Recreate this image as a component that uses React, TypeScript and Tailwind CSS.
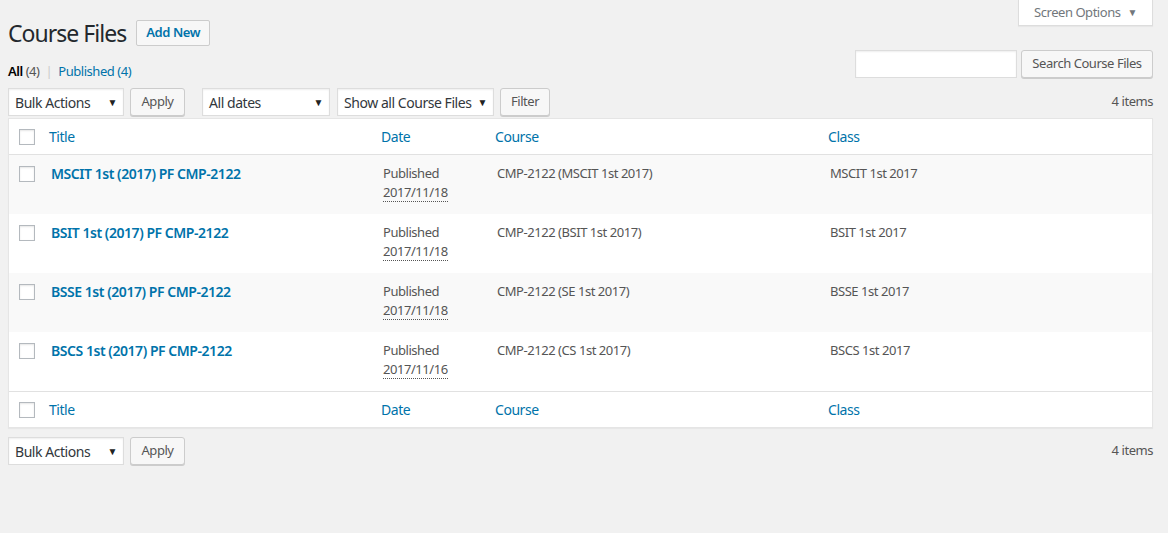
import React from "react";

const font = { fontFamily: '"Segoe UI", "Noto Sans", sans-serif' };

function Checkbox() {
  return <div className="w-4 h-4 bg-white border border-[#b4b9be] shadow-[inset_0_1px_2px_rgba(0,0,0,0.1)]" />;
}

function Select({ label, w }: { label: string; w: string }) {
  return (
    <div className={`${w} h-[28px] bg-white border border-[#ddd] shadow-[inset_0_1px_2px_rgba(0,0,0,0.07)] flex items-center justify-between pl-[6px] pr-[6px] text-[14px] text-[#32373c]`}>
      <span>{label}</span>
      <span className="text-[10px] text-[#222]">▼</span>
    </div>
  );
}

function Button({ label, w }: { label: string; w?: string }) {
  return (
    <div className={`${w ?? ""} h-[28px] px-[8px] bg-[#f7f7f7] border border-[#ccc] rounded-[3px] shadow-[0_1px_0_#ccc] flex items-center justify-center text-[13px] text-[#555]`}>
      {label}
    </div>
  );
}

const cols = "grid grid-cols-[32px_330px_114px_333px_1fr]";

function HeaderRow({ top }: { top?: boolean }) {
  return (
    <div className={`${cols} h-[36px] items-center ${top ? "border-b" : "border-t"} border-[#e1e1e1] text-[14px] text-[#0073aa]`}>
      <div className="pl-[10px]"><Checkbox /></div>
      <div className="pl-[8px]">Title</div>
      <div className="pl-[10px]">Date</div>
      <div className="pl-[10px]">Course</div>
      <div className="pl-[10px]">Class</div>
    </div>
  );
}

const rows = [
  { t: "MSCIT 1st (2017) PF CMP-2122", d: "2017/11/18", c: "CMP-2122 (MSCIT 1st 2017)", k: "MSCIT 1st 2017" },
  { t: "BSIT 1st (2017) PF CMP-2122", d: "2017/11/18", c: "CMP-2122 (BSIT 1st 2017)", k: "BSIT 1st 2017" },
  { t: "BSSE 1st (2017) PF CMP-2122", d: "2017/11/18", c: "CMP-2122 (SE 1st 2017)", k: "BSSE 1st 2017" },
  { t: "BSCS 1st (2017) PF CMP-2122", d: "2017/11/16", c: "CMP-2122 (CS 1st 2017)", k: "BSCS 1st 2017" },
];

export default function App() {
  return (
    <div style={font} className="relative w-full min-h-[533px] bg-[#f1f1f1] pl-[8px] pr-[15px] text-[13px] text-[#444] tracking-[-0.035em] whitespace-nowrap">
      <div className="absolute top-0 right-[15px] w-[135px] h-[26px] bg-white border border-t-0 border-[#ddd] shadow-[0_1px_1px_rgba(0,0,0,0.04)] flex items-center justify-center gap-[7px] text-[13px] text-[#72777c]">
        <span>Screen Options</span>
        <span className="text-[10px] text-[#72777c]">▼</span>
      </div>

      <div className="pt-[20px] flex items-center">
        <h1 className="text-[23px] leading-[26px] text-[#23282d] tracking-[-0.042em]">Course Files</h1>
        <div className="ml-[10px] h-[26px] px-[9px] border border-[#ccc] bg-[#f7f7f7] rounded-[2px] flex items-center text-[13px] font-semibold text-[#0073aa]">Add New</div>
      </div>

      <div className="mt-[4px] h-[28px] flex justify-between items-start">
        <div className="mt-[11px] text-[13px] leading-[20px] text-[#555]">
          <span className="text-black font-semibold">All</span> <span>(4)</span>
          <span className="mx-[6px] text-[#ccc]">|</span>
          <span className="text-[#0073aa]">Published <span>(4)</span></span>
        </div>
        <div className="flex gap-[4px]">
          <div className="w-[162px] h-[28px] bg-white border border-[#ddd] shadow-[inset_0_1px_2px_rgba(0,0,0,0.07)]" />
          <Button label="Search Course Files" w="w-[132px]" />
        </div>
      </div>

      <div className="mt-[10px] flex items-center">
        <Select label="Bulk Actions" w="w-[116px]" />
        <div className="ml-[6px]"><Button label="Apply" w="w-[55px]" /></div>
        <div className="ml-[17px]"><Select label="All dates" w="w-[128px]" /></div>
        <div className="ml-[7px]"><Select label="Show all Course Files" w="w-[157px]" /></div>
        <div className="ml-[6px]"><Button label="Filter" w="w-[50px]" /></div>
        <div className="ml-auto text-[13px] text-[#555]">4 items</div>
      </div>

      <div className="mt-[2px] bg-white border border-[#e5e5e5] shadow-[0_1px_1px_rgba(0,0,0,0.04)]">
        <HeaderRow top />
        {rows.map((r, i) => (
          <div key={i} className={`${cols} h-[59px] ${i % 2 === 0 ? "bg-[#f9f9f9]" : "bg-white"} text-[13px] text-[#555]`}>
            <div className="pl-[10px] pt-[11px]"><Checkbox /></div>
            <div className="pl-[10px] pt-[9px] text-[14px] leading-[19px] font-semibold text-[#0073aa]">{r.t}</div>
            <div className="pl-[12px] pt-[9px] leading-[19px]">
              <div>Published</div>
              <div><span className="border-b border-dotted border-[#555]">{r.d}</span></div>
            </div>
            <div className="pl-[12px] pt-[9px] leading-[19px]">{r.c}</div>
            <div className="pl-[12px] pt-[9px] leading-[19px]">{r.k}</div>
          </div>
        ))}
        <HeaderRow />
      </div>

      <div className="mt-[9px] flex items-center">
        <Select label="Bulk Actions" w="w-[116px]" />
        <div className="ml-[6px]"><Button label="Apply" w="w-[55px]" /></div>
        <div className="ml-auto text-[13px] text-[#555]">4 items</div>
      </div>
    </div>
  );
}
